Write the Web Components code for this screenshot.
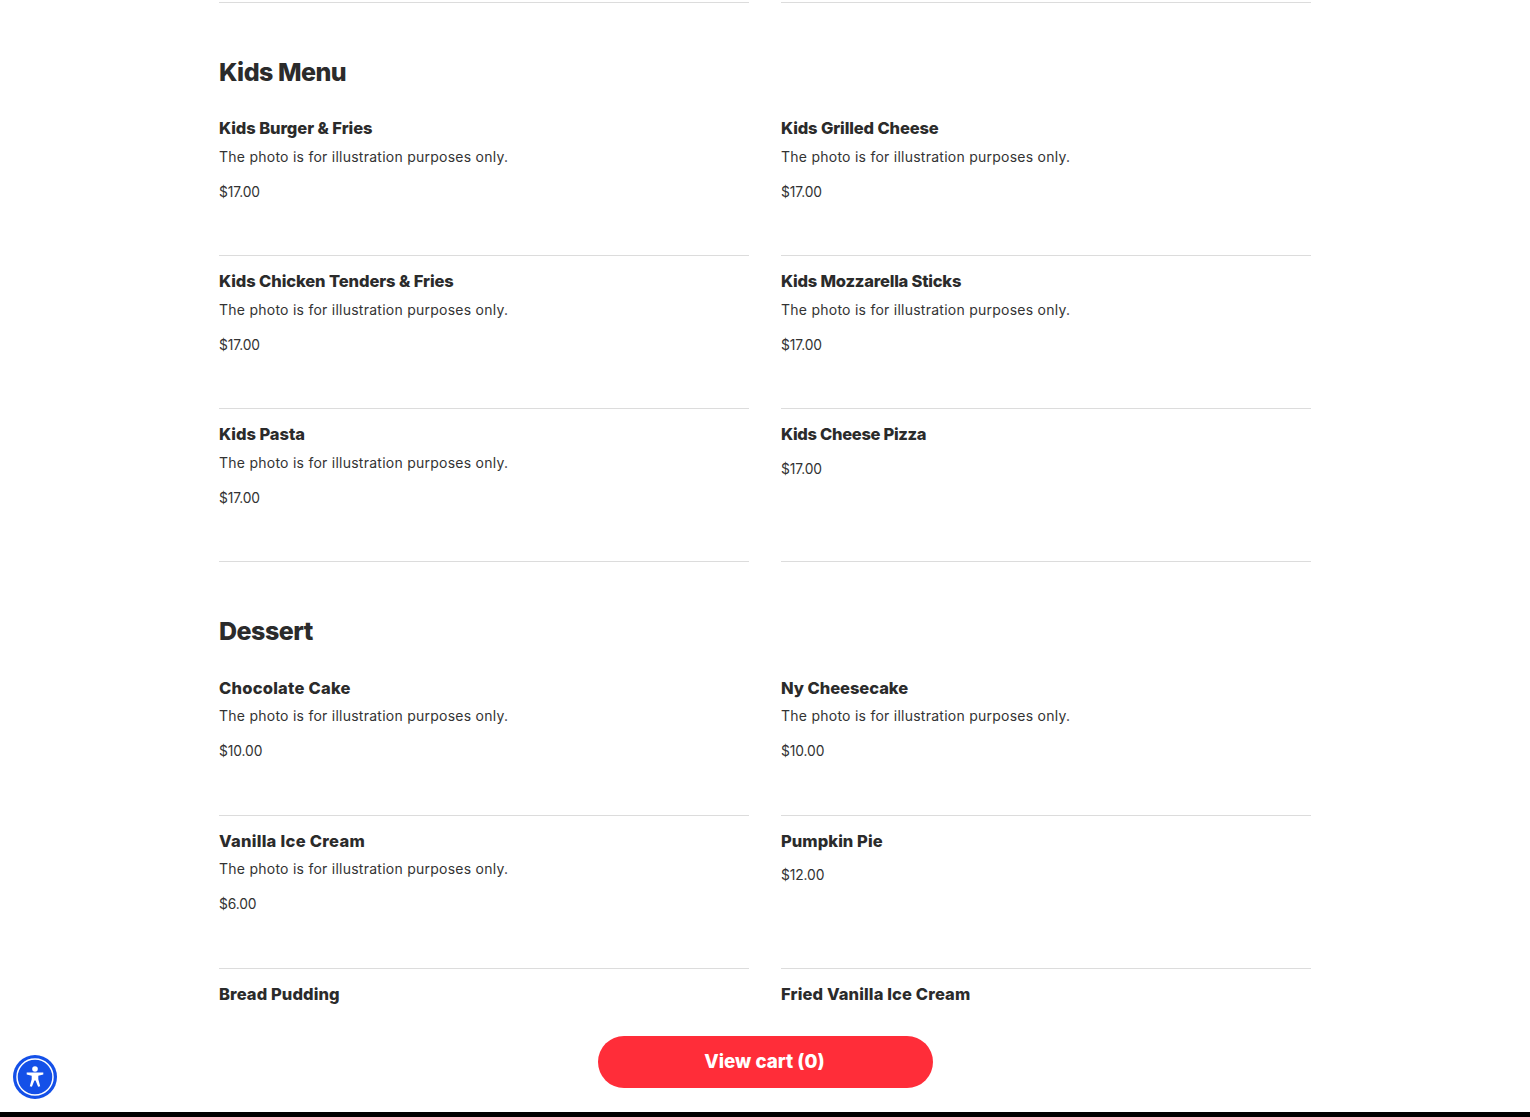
<!DOCTYPE html>
<html><head><meta charset="utf-8"><style>
html,body{margin:0;padding:0;background:#fff;height:100%;overflow:hidden}
body{font-family:"Inter","Noto Sans",sans-serif;color:#2b2b2b}
</style></head><body>
<template id="t-item"><style>
:host{display:block;height:152px;border-bottom:1px solid #dcdcdc}
.n{display:block;font-size:16.5px;font-weight:800;line-height:24px;margin-top:13px;color:#2b2b2b;letter-spacing:var(--track,-.12px)}
.d{display:block;font-size:14px;line-height:21px;margin-top:5.6px;color:#333;letter-spacing:.25px}
.p{display:block;font-size:13.8px;line-height:21px;margin-top:15px;color:#333;letter-spacing:-.1px}
:host([nodesc]) .p{margin-top:12.8px}
</style><span class="n"><slot name="n"></slot></span><span class="d"><slot name="d"></slot></span><span class="p"><slot name="p"></slot></span></template>
<template id="t-section"><style>
:host{display:block;width:1092px;margin:0 auto}
h2{margin:0;font-size:25px;font-weight:800;line-height:38px;padding-top:50px;padding-bottom:var(--head-bottom,12px);color:#2b2b2b;letter-spacing:-.5px}
.g{display:grid;grid-template-columns:530px 530px;column-gap:32px}
</style><h2><slot name="title"></slot></h2><div class="g"><slot></slot></div></template>
<template id="t-cart"><style>
:host{position:fixed;left:0;right:0;bottom:0;height:105px;background:#fff;display:flex;flex-direction:column;box-sizing:border-box;border-bottom:5px solid #000;align-items:center}
button{all:unset;box-sizing:border-box;margin-top:24px;margin-left:1px;padding-right:2px;width:335px;height:52px;line-height:48px;border-radius:26px;background:#ff2d39;color:#fff;font-family:"Inter",sans-serif;font-size:18.8px;font-weight:800;text-align:center}
</style><button><slot></slot></button></template>
<template id="t-a11y"><style>
:host{position:fixed;left:13px;bottom:18px;width:44px;height:44px;display:block}
svg{display:block}
</style><svg width="44" height="44" viewBox="0 0 44 44"><circle cx="22" cy="22" r="22" fill="#1450e8"/><circle cx="22" cy="22" r="18" fill="none" stroke="#fff" stroke-width="1.5"/><circle cx="22" cy="14" r="2.8" fill="#fff"/><path d="M13.700 17.600H30.300V19.500L25.300 20.700V24.300L27.200 31.200 25.100 31.700 22.600 25.600H21.400L18.900 31.700 16.800 31.200 18.700 24.300V20.700L13.700 19.500Z" fill="#fff"/></svg></template>
<menu-page></menu-page>
<script>
const tpl=id=>document.getElementById(id).content.cloneNode(true);
class Base extends HTMLElement{constructor(id){super();this.attachShadow({mode:'open'}).appendChild(tpl(id));}}
customElements.define('menu-item',class extends Base{constructor(){super('t-item')}});
customElements.define('menu-section',class extends Base{constructor(){super('t-section')}});
customElements.define('cart-bar',class extends Base{constructor(){super('t-cart')}});
customElements.define('a11y-button',class extends Base{constructor(){super('t-a11y')}});
const D='The photo is for illustration purposes only.';
const secs=[['Kids Menu',[['Kids Burger & Fries',1,'$17.00',-.07],['Kids Grilled Cheese',1,'$17.00',-.12],['Kids Chicken Tenders & Fries',1,'$17.00',-.09],['Kids Mozzarella Sticks',1,'$17.00',-.21],['Kids Pasta',1,'$17.00',-.02],['Kids Cheese Pizza',0,'$17.00',-.3]]],
['Dessert',[['Chocolate Cake',1,'$10.00',.24],['Ny Cheesecake',1,'$10.00',-.04],['Vanilla Ice Cream',1,'$6.00',.29],['Pumpkin Pie',0,'$12.00',.06],['Bread Pudding',0,'',.11],['Fried Vanilla Ice Cream',0,'',.14]]]];
const esc=s=>s.replace(/&/g,'&amp;');
customElements.define('menu-page',class extends HTMLElement{constructor(){super();
const r=this.attachShadow({mode:'open'});
r.innerHTML=`<style>:host{display:block;height:100vh;overflow:hidden}
.top{width:1092px;margin:0 auto;display:grid;grid-template-columns:530px 530px;column-gap:32px;height:3px}
.top i{display:block;height:2px;border-bottom:1px solid #dcdcdc}
.second{--head-bottom:12.6px}</style>
<div class="top"><i></i><i></i></div>
`+secs.map(([t,it],i)=>`<menu-section class="${i?'second':''}"><span slot="title">${t}</span>${it.map(([n,d,p,k])=>`<menu-item ${d?'':'nodesc'} style="--track:${k}px"><span slot="n">${esc(n)}</span>${d?`<span slot="d">${D}</span>`:''}${p?`<span slot="p">${p}</span>`:''}</menu-item>`).join('')}</menu-section>`).join('')+`<cart-bar>View cart (0)</cart-bar><a11y-button></a11y-button>`;
}});
</script></body></html>
